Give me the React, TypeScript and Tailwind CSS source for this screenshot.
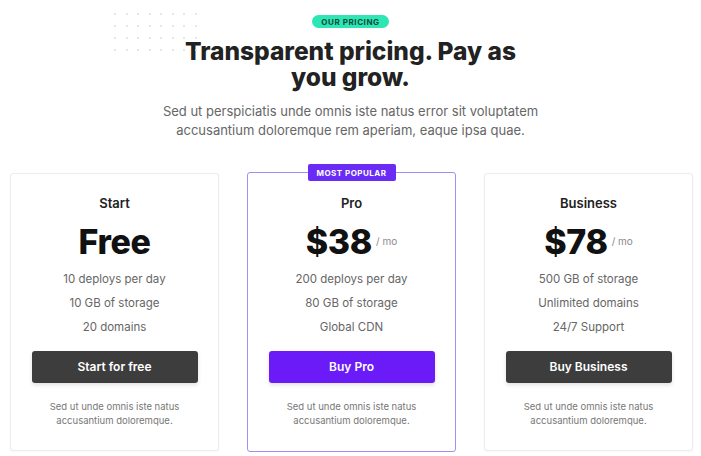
import React from "react";

const plans = [
  {
    name: "Start",
    price: "Free",
    per: false,
    features: ["10 deploys per day", "10 GB of storage", "20 domains"],
    cta: "Start for free",
    popular: false,
  },
  {
    name: "Pro",
    price: "$38",
    per: true,
    features: ["200 deploys per day", "80 GB of storage", "Global CDN"],
    cta: "Buy Pro",
    popular: true,
  },
  {
    name: "Business",
    price: "$78",
    per: true,
    features: ["500 GB of storage", "Unlimited domains", "24/7 Support"],
    cta: "Buy Business",
    popular: false,
  },
];

function Dots() {
  const cols = Array.from({ length: 8 });
  const rows = Array.from({ length: 4 });
  return (
    <div className="absolute left-[114px] top-[13px] flex flex-col gap-[10px]">
      {rows.map((_, r) => (
        <div key={r} className="flex gap-[9.5px]">
          {cols.map((_, c) => (
            <div key={c} className="w-[2px] h-[2px] rounded-full bg-[#dedee2]" />
          ))}
        </div>
      ))}
    </div>
  );
}

export default function App() {
  return (
    <div
      className="relative w-[701px] h-[456px] bg-white overflow-hidden text-[#222]"
      style={{ fontFamily: "Inter, 'Noto Sans', sans-serif" }}
    >
      <Dots />
      <div className="flex flex-col items-center pt-[15px]">
        <div className="h-[13px] px-[9px] rounded-full bg-[#2ee6b4] flex items-center text-[8px] font-bold tracking-[0.07em] text-[#0d4a3a] leading-none">
          OUR PRICING
        </div>
        <h1 className="mt-[10px] w-[345px] text-center text-[24.5px] leading-[26px] font-extrabold text-[#222]">
          Transparent pricing. Pay as you grow.
        </h1>
        <p className="mt-[12px] w-[400px] text-center text-[13px] leading-[19px] text-[#666]">
          Sed ut perspiciatis unde omnis iste natus error sit voluptatem accusantium doloremque rem aperiam, eaque ipsa quae.
        </p>
      </div>
      <div className="grid grid-cols-3 gap-[28px] pl-[10px] pr-[8px] mt-[33px]">
        {plans.map((p) => (
          <div
            key={p.name}
            className={
              "relative flex flex-col items-center bg-white rounded-[3px] " +
              (p.popular
                ? "border border-[#a48df5] -mt-[1px] -mb-[1px] pt-[21px] pb-[23px]"
                : "border border-[#ececec] shadow-[0_1px_2px_rgba(0,0,0,0.04)] pt-[20px] pb-[22px]")
            }
          >
            {p.popular && (
              <div className="absolute -top-[9px] left-1/2 -translate-x-1/2 h-[17px] px-[9px] rounded-[2px] bg-[#6a2cf5] text-white text-[8px] font-bold tracking-[0.06em] flex items-center leading-none">
                MOST POPULAR
              </div>
            )}
            <div className="text-[13px] leading-[18px] font-semibold text-[#222]">{p.name}</div>
            <div className="mt-[12px] flex items-center h-[36px]">
              <span className="text-[34px] leading-[36px] font-extrabold text-[#111] tracking-[-0.01em]">{p.price}</span>
              {p.per && <span className="ml-[4px] -mt-[2px] text-[10px] text-[#8a8a8a]">/ mo</span>}
            </div>
            <div className="mt-[7px] flex flex-col items-center">
              {p.features.map((f) => (
                <div key={f} className="text-[11.5px] leading-[24px] text-[#666]">
                  {f}
                </div>
              ))}
            </div>
            <button
              className={
                "mt-[12px] w-[166px] h-[32px] rounded-[3px] text-white text-[12px] font-semibold shadow-[0_2px_4px_rgba(0,0,0,0.12)] " +
                (p.popular ? "bg-[#6a1bf7]" : "bg-[#3d3d3d]")
              }
            >
              {p.cta}
            </button>
            <p className="mt-[17px] w-[150px] text-center text-[9.5px] leading-[14px] text-[#777]">
              Sed ut unde omnis iste natus accusantium doloremque.
            </p>
          </div>
        ))}
      </div>
    </div>
  );
}
